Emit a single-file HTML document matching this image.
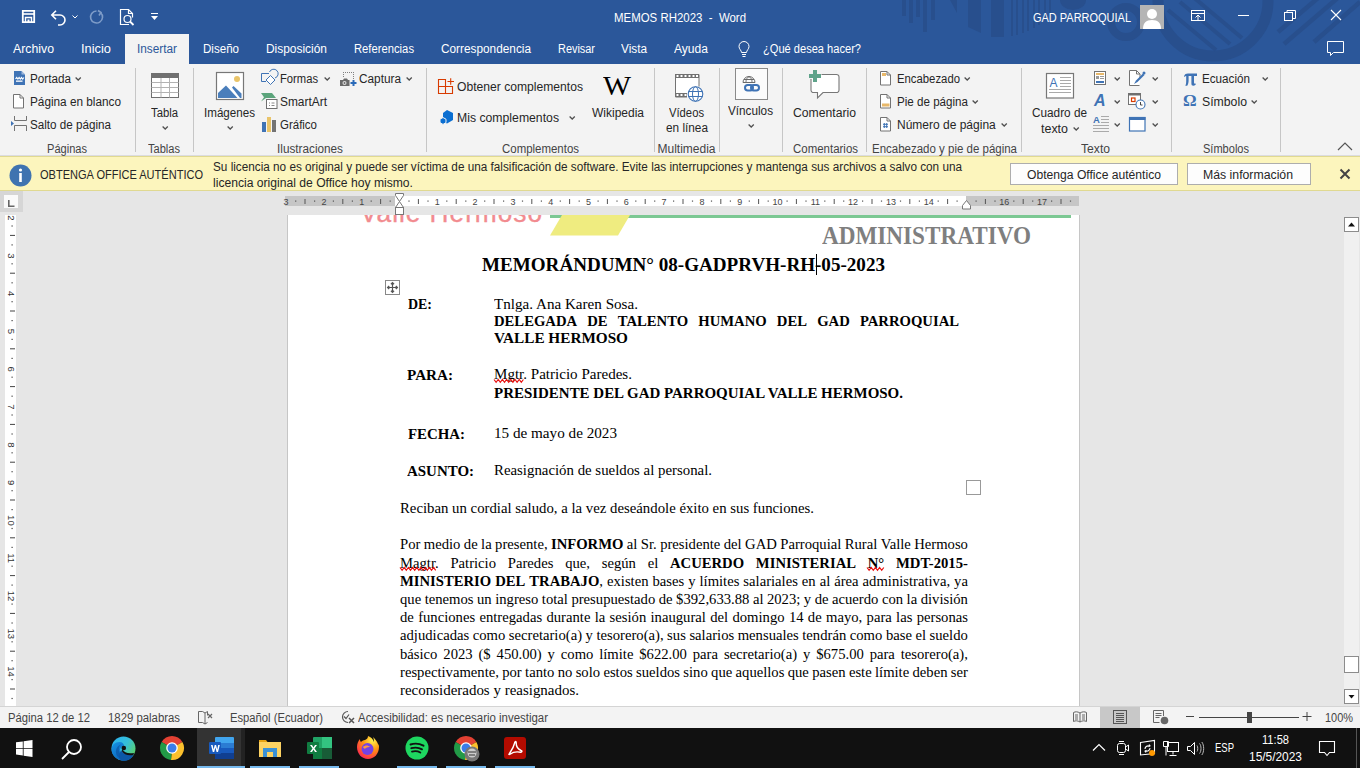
<!DOCTYPE html>
<html><head><meta charset="utf-8">
<style>
*{margin:0;padding:0;box-sizing:border-box}
html,body{width:1360px;height:768px;overflow:hidden;background:#e6e6e6;font-family:"Liberation Sans",sans-serif;position:relative}
.a{position:absolute;white-space:nowrap}
svg.a{overflow:visible}
.wt{position:absolute;color:#fff;font-size:12px;line-height:14px;white-space:nowrap}
.tab{position:absolute;top:42px;color:#fff;font-size:12px;line-height:14px;white-space:nowrap}
.r{position:absolute;font-size:12px;color:#262626;white-space:nowrap;line-height:14px}
.gl{position:absolute;font-size:12px;color:#444;white-space:nowrap;line-height:14px;top:141px}
.sep{position:absolute;top:68px;width:1px;height:84px;background:#c6c6c6}
.m{position:absolute;font-size:12px;color:#262626;white-space:nowrap;line-height:14px}
.d{position:absolute;font-family:"Liberation Serif",serif;font-size:14.67px;line-height:17px;color:#000;white-space:nowrap}
.d b{font-weight:bold}
.rn{position:absolute;font-size:9px;line-height:10px;color:#555;white-space:nowrap}
.st{position:absolute;top:710px;font-size:12px;color:#444;white-space:nowrap;line-height:14px}
u{text-decoration:none}
</style></head><body>
<div class="a" style="left:0;top:0;width:1360px;height:64px;background:#2b579a"></div>
<svg class="a" style="left:0;top:0" width="1360" height="64"><defs><clipPath id="tc"><rect width="1360" height="64"/></clipPath></defs><g clip-path="url(#tc)">
<g fill="#284f8d">
<rect x="902" y="0" width="4" height="16"/><rect x="909" y="0" width="4" height="23"/><rect x="916" y="0" width="4" height="17"/><rect x="923" y="0" width="4" height="32"/><rect x="931" y="0" width="4" height="20"/>
<polygon points="950,0 957,0 957,13"/>
<path d="M968 0h13v33l-13-6z"/><path d="M991 0h13v37h-13z"/>
<rect x="1011" y="0" width="2" height="36"/><rect x="1016" y="0" width="2" height="35"/><rect x="1022" y="0" width="2" height="33"/><rect x="1027" y="0" width="2" height="31"/><rect x="1033" y="0" width="2" height="28"/><rect x="1038" y="0" width="2" height="25"/><rect x="1044" y="0" width="2" height="20"/><rect x="1049" y="0" width="2" height="14"/>
<ellipse cx="1073" cy="0" rx="13" ry="10"/>
</g>
<g fill="none" stroke="#284f8d">
<circle cx="1126" cy="22" r="15" stroke-width="8"/>
<circle cx="1213" cy="1" r="55" stroke-width="11"/>
<g stroke-width="4"><path d="M1168 10l48 40"/><path d="M1180 2l50 42"/><path d="M1192 -4l50 42"/></g>
<g stroke-width="4.5"><path d="M1340 -4l-56 48"/><path d="M1318 -2l-40 34"/><path d="M1360 2l-46 40"/></g>
</g></g></svg>
<span id="t0" class="wt" style="left:614.0px;top:11px;transform:scaleX(0.9532);transform-origin:0 0;">MEMOS RH2023&nbsp; -&nbsp; Word</span>
<span id="t1" class="wt" style="left:1033.0px;top:11px;transform:scaleX(0.9147);transform-origin:0 0;">GAD PARROQUIAL</span>
<div class="a" style="left:1140px;top:5px;width:24px;height:24px;background:#b4b4b4;overflow:hidden"><svg width="24" height="24"><circle cx="12" cy="9" r="5" fill="#fff"/><path d="M3 24c0-6 3-9 9-9s9 3 9 9z" fill="#fff"/></svg></div>
<svg class="a" style="left:1190px;top:8px" width="18" height="18" fill="none" stroke="#fff" stroke-width="1"><rect x="1.5" y="2.5" width="13" height="10"/><path d="M1.5 5.5h13M8 12V7M5.5 9.5L8 7l2.5 2.5"/></svg>
<svg class="a" style="left:1238px;top:14px" width="14" height="3"><rect x="0" y="1" width="11" height="1" fill="#fff"/></svg>
<svg class="a" style="left:1284px;top:9px" width="14" height="14" fill="none" stroke="#fff" stroke-width="1"><rect x="0.5" y="3.5" width="8" height="8"/><path d="M3 3.5V1.5h8.5v8H9"/></svg>
<svg class="a" style="left:1330px;top:9px" width="14" height="14" fill="none" stroke="#fff" stroke-width="1.1"><path d="M1 1l10 10M11 1L1 11"/></svg>
<span id="t2" class="tab" style="left:13.0px;top:42px;transform:scaleX(1.0246);transform-origin:0 0;">Archivo</span>
<span id="t3" class="tab" style="left:81.0px;top:42px;transform:scaleX(1.0708);transform-origin:0 0;">Inicio</span>
<span id="t4" class="tab" style="left:203.0px;top:42px;transform:scaleX(0.9636);transform-origin:0 0;">Diseño</span>
<span id="t5" class="tab" style="left:266.0px;top:42px;transform:scaleX(0.9941);transform-origin:0 0;">Disposición</span>
<span id="t6" class="tab" style="left:354.0px;top:42px;transform:scaleX(0.9370);transform-origin:0 0;">Referencias</span>
<span id="t7" class="tab" style="left:441.0px;top:42px;transform:scaleX(0.9848);transform-origin:0 0;">Correspondencia</span>
<span id="t8" class="tab" style="left:558.0px;top:42px;transform:scaleX(0.9094);transform-origin:0 0;">Revisar</span>
<span id="t9" class="tab" style="left:621.0px;top:42px;transform:scaleX(0.9823);transform-origin:0 0;">Vista</span>
<span id="t10" class="tab" style="left:674.0px;top:42px;transform:scaleX(1.0055);transform-origin:0 0;">Ayuda</span>
<span id="t11" class="tab" style="left:763.0px;top:42px;transform:scaleX(0.9238);transform-origin:0 0;">¿Qué desea hacer?</span>
<div class="a" style="left:125px;top:34px;width:64px;height:30px;background:#f3f3f3"></div>
<span id="t12" class="tab" style="left:137.0px;top:42px;color:#2b579a;transform:scaleX(0.9831);transform-origin:0 0;">Insertar</span>
<svg class="a" style="left:737px;top:41px" width="14" height="17" fill="none" stroke="#fff" stroke-width="1"><path d="M4.5 11.5c0-2-2.5-3.5-2.5-6a5 5 0 0 1 10 0c0 2.5-2.5 4-2.5 6z"/><path d="M5 13.5h4M5.5 15.5h3"/></svg>
<svg class="a" style="left:1326px;top:40px" width="20" height="18" fill="none" stroke="#fff" stroke-width="1"><path d="M1.5 1.5h16v11h-10l-3 3v-3h-3z"/></svg>
<svg class="a" style="left:21px;top:9px" width="17" height="17" fill="none" stroke="#fff"><path d="M1.8 1.8h11.4v11.4H1.8z" stroke-width="1.8"/><path d="M2 5h11" stroke-width="1.6"/><path d="M4.5 13V8.5h6V13" stroke-width="1.4"/><rect x="6.5" y="10.5" width="2" height="3" fill="#fff" stroke="none"/></svg>
<svg class="a" style="left:50px;top:9px" width="30" height="16" fill="none" stroke="#fff" stroke-width="1.6"><path d="M2 6h8a5 5 0 0 1 0 10h-2M6 1.8L1.8 6 6 10.2"/><path d="M22.5 6.5l2.5 2.5 2.5-2.5" stroke-width="1"/></svg>
<svg class="a" style="left:89px;top:9px" width="16" height="16" fill="none" stroke="#7e9cc8" stroke-width="1.6"><path d="M11.5 3.5A6 6 0 1 1 7.5 2"/><path d="M9 1.5l3 2-2 3" /></svg>
<svg class="a" style="left:119px;top:8px" width="18" height="19" fill="none" stroke="#fff" stroke-width="1.2"><path d="M10 16.5H1.5V1.5h8l4 4v4"/><path d="M9.5 1.5v4h4"/><circle cx="8.5" cy="11" r="3.5"/><path d="M11 13.5l3.5 3.5" stroke-width="1.8"/></svg>
<svg class="a" style="left:150px;top:12px" width="10" height="10" fill="#fff"><rect x="1" y="1" width="7" height="1"/><path d="M1 4h7l-3.5 4z"/></svg>
<div class="a" style="left:0;top:64px;width:1360px;height:92px;background:#f3f3f3"></div>
<div class="a" style="left:0;top:155px;width:1360px;height:1px;background:#dcdce0"></div>
<div class="sep" style="left:135px"></div>
<div class="sep" style="left:193px"></div>
<div class="sep" style="left:426px"></div>
<div class="sep" style="left:654px"></div>
<div class="sep" style="left:719px"></div>
<div class="sep" style="left:782px"></div>
<div class="sep" style="left:866px"></div>
<div class="sep" style="left:1021px"></div>
<div class="sep" style="left:1171px"></div>
<div class="sep" style="left:1280px"></div>
<span id="t13" class="r" style="left:30.0px;top:72px;transform:scaleX(0.9755);transform-origin:0 0;">Portada</span>
<svg class="a" style="left:75px;top:77px" width="7" height="4"><path d="M0.6 0.6l2.6 2.4 2.6-2.4" fill="none" stroke="#505050" stroke-width="1.3"/></svg>

<span id="t14" class="r" style="left:30.0px;top:95px;transform:scaleX(0.9811);transform-origin:0 0;">Página en blanco</span>
<span id="t15" class="r" style="left:30.0px;top:118px;transform:scaleX(0.9712);transform-origin:0 0;">Salto de página</span>
<span id="t16" class="gl" style="left:46.5px;top:142px;transform:scaleX(0.9222);transform-origin:0 0;">Páginas</span>
<span id="t17" class="r" style="left:151.0px;top:106px;transform:scaleX(0.9412);transform-origin:0 0;">Tabla</span>
<svg class="a" style="left:162px;top:126px" width="7" height="4"><path d="M0.6 0.6l2.6 2.4 2.6-2.4" fill="none" stroke="#505050" stroke-width="1.3"/></svg>

<span id="t18" class="gl" style="left:147.5px;top:142px;transform:scaleX(0.9225);transform-origin:0 0;">Tablas</span>
<span id="t19" class="r" style="left:204.0px;top:106px;transform:scaleX(0.9677);transform-origin:0 0;">Imágenes</span>
<svg class="a" style="left:227px;top:126px" width="7" height="4"><path d="M0.6 0.6l2.6 2.4 2.6-2.4" fill="none" stroke="#505050" stroke-width="1.3"/></svg>

<span id="t20" class="r" style="left:280.0px;top:72px;transform:scaleX(0.9343);transform-origin:0 0;">Formas</span>
<svg class="a" style="left:324px;top:77px" width="7" height="4"><path d="M0.6 0.6l2.6 2.4 2.6-2.4" fill="none" stroke="#505050" stroke-width="1.3"/></svg>

<span id="t21" class="r" style="left:280.0px;top:95px;transform:scaleX(0.9927);transform-origin:0 0;">SmartArt</span>
<span id="t22" class="r" style="left:280.0px;top:118px;transform:scaleX(0.9564);transform-origin:0 0;">Gráfico</span>
<span id="t23" class="r" style="left:359.0px;top:72px;transform:scaleX(0.9835);transform-origin:0 0;">Captura</span>
<svg class="a" style="left:406px;top:77px" width="7" height="4"><path d="M0.6 0.6l2.6 2.4 2.6-2.4" fill="none" stroke="#505050" stroke-width="1.3"/></svg>

<span id="t24" class="gl" style="left:276.5px;top:142px;transform:scaleX(0.9796);transform-origin:0 0;">Ilustraciones</span>
<span id="t25" class="r" style="left:457.0px;top:80px;transform:scaleX(1.0101);transform-origin:0 0;">Obtener complementos</span>
<span id="t26" class="r" style="left:457.0px;top:111px;transform:scaleX(1.0197);transform-origin:0 0;">Mis complementos</span>
<svg class="a" style="left:569px;top:116px" width="7" height="4"><path d="M0.6 0.6l2.6 2.4 2.6-2.4" fill="none" stroke="#505050" stroke-width="1.3"/></svg>

<span id="t27" class="r" style="left:592.0px;top:106px;">Wikipedia</span>
<span id="t28" class="gl" style="left:501.5px;top:142px;transform:scaleX(0.9541);transform-origin:0 0;">Complementos</span>
<span id="t29" class="r" style="left:669.0px;top:106px;transform:scaleX(0.9368);transform-origin:0 0;">Vídeos</span>
<span id="t30" class="r" style="left:666.0px;top:121px;transform:scaleX(0.9835);transform-origin:0 0;">en línea</span>
<span id="t31" class="gl" style="left:657.5px;top:142px;">Multimedia</span>
<div class="a" style="left:735px;top:68px;width:33px;height:32px;border:1px solid #8a8a8a;background:#fbfbfb"></div>
<span id="t32" class="r" style="left:728.0px;top:104px;transform:scaleX(0.9776);transform-origin:0 0;">Vínculos</span>
<svg class="a" style="left:748px;top:124px" width="7" height="4"><path d="M0.6 0.6l2.6 2.4 2.6-2.4" fill="none" stroke="#505050" stroke-width="1.3"/></svg>

<span id="t33" class="r" style="left:793.0px;top:106px;transform:scaleX(1.0156);transform-origin:0 0;">Comentario</span>
<span id="t34" class="gl" style="left:792.5px;top:142px;transform:scaleX(0.9554);transform-origin:0 0;">Comentarios</span>
<span id="t35" class="r" style="left:897.0px;top:72px;transform:scaleX(0.9440);transform-origin:0 0;">Encabezado</span>
<svg class="a" style="left:964px;top:77px" width="7" height="4"><path d="M0.6 0.6l2.6 2.4 2.6-2.4" fill="none" stroke="#505050" stroke-width="1.3"/></svg>

<span id="t36" class="r" style="left:897.0px;top:95px;transform:scaleX(0.9672);transform-origin:0 0;">Pie de página</span>
<svg class="a" style="left:972px;top:100px" width="7" height="4"><path d="M0.6 0.6l2.6 2.4 2.6-2.4" fill="none" stroke="#505050" stroke-width="1.3"/></svg>

<span id="t37" class="r" style="left:897.0px;top:118px;">Número de página</span>
<svg class="a" style="left:1001px;top:123px" width="7" height="4"><path d="M0.6 0.6l2.6 2.4 2.6-2.4" fill="none" stroke="#505050" stroke-width="1.3"/></svg>

<span id="t38" class="gl" style="left:871.5px;top:142px;transform:scaleX(0.9574);transform-origin:0 0;">Encabezado y pie de página</span>
<span id="t39" class="r" style="left:1032.0px;top:106px;transform:scaleX(0.9813);transform-origin:0 0;">Cuadro de</span>
<span id="t40" class="r" style="left:1041.0px;top:122px;transform:scaleX(1.0378);transform-origin:0 0;">texto</span>
<svg class="a" style="left:1073px;top:127px" width="7" height="4"><path d="M0.6 0.6l2.6 2.4 2.6-2.4" fill="none" stroke="#505050" stroke-width="1.3"/></svg>

<span id="t41" class="gl" style="left:1080.5px;top:142px;transform:scaleX(1.0109);transform-origin:0 0;">Texto</span>
<svg class="a" style="left:1114px;top:77px" width="7" height="4"><path d="M0.6 0.6l2.6 2.4 2.6-2.4" fill="none" stroke="#505050" stroke-width="1.3"/></svg>

<svg class="a" style="left:1152px;top:77px" width="7" height="4"><path d="M0.6 0.6l2.6 2.4 2.6-2.4" fill="none" stroke="#505050" stroke-width="1.3"/></svg>

<svg class="a" style="left:1114px;top:100px" width="7" height="4"><path d="M0.6 0.6l2.6 2.4 2.6-2.4" fill="none" stroke="#505050" stroke-width="1.3"/></svg>

<svg class="a" style="left:1152px;top:100px" width="7" height="4"><path d="M0.6 0.6l2.6 2.4 2.6-2.4" fill="none" stroke="#505050" stroke-width="1.3"/></svg>

<svg class="a" style="left:1114px;top:123px" width="7" height="4"><path d="M0.6 0.6l2.6 2.4 2.6-2.4" fill="none" stroke="#505050" stroke-width="1.3"/></svg>

<svg class="a" style="left:1152px;top:123px" width="7" height="4"><path d="M0.6 0.6l2.6 2.4 2.6-2.4" fill="none" stroke="#505050" stroke-width="1.3"/></svg>

<span id="t42" class="r" style="left:1202.0px;top:72px;transform:scaleX(0.9722);transform-origin:0 0;">Ecuación</span>
<svg class="a" style="left:1262px;top:77px" width="7" height="4"><path d="M0.6 0.6l2.6 2.4 2.6-2.4" fill="none" stroke="#505050" stroke-width="1.3"/></svg>

<span id="t43" class="r" style="left:1202.0px;top:95px;transform:scaleX(1.0220);transform-origin:0 0;">Símbolo</span>
<svg class="a" style="left:1251px;top:100px" width="7" height="4"><path d="M0.6 0.6l2.6 2.4 2.6-2.4" fill="none" stroke="#505050" stroke-width="1.3"/></svg>

<span id="t44" class="gl" style="left:1202.5px;top:142px;transform:scaleX(0.9194);transform-origin:0 0;">Símbolos</span>
<svg class="a" style="left:1337px;top:142px" width="16" height="9"><path d="M1 8l7-7 7 7" fill="none" stroke="#555" stroke-width="1.2"/></svg>
<div class="a" style="left:0;top:156px;width:1360px;height:35px;background:#fcf5bd;border-top:1px solid #e0d991;border-bottom:1px solid #e0d991"></div>
<svg class="a" style="left:9px;top:164px" width="23" height="23"><circle cx="11.5" cy="11.5" r="11" fill="#3f73b0"/><circle cx="11.5" cy="6" r="1.6" fill="#fff"/><rect x="10.2" y="9" width="2.6" height="9" fill="#fff"/></svg>
<span id="t45" class="m" style="left:40.0px;top:168px;transform:scaleX(0.9190);transform-origin:0 0;">OBTENGA OFFICE AUTÉNTICO</span>
<span id="t46" class="m" style="left:213.0px;top:160px;transform:scaleX(0.9790);transform-origin:0 0;">Su licencia no es original y puede ser víctima de una falsificación de software. Evite las interrupciones y mantenga sus archivos a salvo con una</span>
<span id="t47" class="m" style="left:213.0px;top:176px;transform:scaleX(1.0107);transform-origin:0 0;">licencia original de Office hoy mismo.</span>
<div class="a" style="left:1010px;top:163px;width:168px;height:22px;background:#fdfdfd;border:1px solid #adadad"></div>
<div class="a" style="left:1187px;top:163px;width:124px;height:22px;background:#fdfdfd;border:1px solid #adadad"></div>
<span id="t48" class="m" style="left:1027.0px;top:168px;transform:scaleX(1.0110);transform-origin:0 0;">Obtenga Office auténtico</span>
<span id="t49" class="m" style="left:1203.0px;top:168px;transform:scaleX(1.0224);transform-origin:0 0;">Más información</span>
<svg class="a" style="left:1339px;top:168px" width="12" height="12" fill="none" stroke="#444" stroke-width="2"><path d="M1.5 1.5l9 9M10.5 1.5l-9 9"/></svg>
<div class="a" style="left:0;top:191px;width:23px;height:21px;background:#d6d6d6"></div>
<div class="a" style="left:4px;top:195px;width:14px;height:13px;background:#fafafa"></div>
<svg class="a" style="left:8px;top:200px" width="7" height="7"><path d="M0 0h1.6v5.4H6.5V7H0z" fill="#666"/></svg>
<div class="a" style="left:285px;top:196px;width:794px;height:10px;background:#fff"></div>
<div class="a" style="left:285px;top:196px;width:110px;height:10px;background:#c6c6c6"></div>
<div class="a" style="left:966px;top:196px;width:113px;height:10px;background:#c6c6c6"></div>
<div class="a" style="left:5px;top:215px;width:11px;height:491px;background:#fff"></div>
<svg class="a" style="left:0;top:0" width="1360" height="768"><text x="286.1" y="204.5" font-family="Liberation Sans" font-size="9" fill="#444" text-anchor="middle">3</text><rect x="295.1" y="200.5" width="1.2" height="1.2" fill="#555"/><rect x="304.5" y="199" width="1" height="5" fill="#555"/><rect x="314.0" y="200.5" width="1.2" height="1.2" fill="#555"/><text x="323.9" y="204.5" font-family="Liberation Sans" font-size="9" fill="#444" text-anchor="middle">2</text><rect x="332.8" y="200.5" width="1.2" height="1.2" fill="#555"/><rect x="342.3" y="199" width="1" height="5" fill="#555"/><rect x="351.8" y="200.5" width="1.2" height="1.2" fill="#555"/><text x="361.7" y="204.5" font-family="Liberation Sans" font-size="9" fill="#444" text-anchor="middle">1</text><rect x="370.6" y="200.5" width="1.2" height="1.2" fill="#555"/><rect x="380.1" y="199" width="1" height="5" fill="#555"/><rect x="389.6" y="200.5" width="1.2" height="1.2" fill="#555"/><rect x="408.4" y="200.5" width="1.2" height="1.2" fill="#555"/><rect x="417.9" y="199" width="1" height="5" fill="#555"/><rect x="427.4" y="200.5" width="1.2" height="1.2" fill="#555"/><text x="437.3" y="204.5" font-family="Liberation Sans" font-size="9" fill="#444" text-anchor="middle">1</text><rect x="446.2" y="200.5" width="1.2" height="1.2" fill="#555"/><rect x="455.7" y="199" width="1" height="5" fill="#555"/><rect x="465.2" y="200.5" width="1.2" height="1.2" fill="#555"/><text x="475.1" y="204.5" font-family="Liberation Sans" font-size="9" fill="#444" text-anchor="middle">2</text><rect x="484.1" y="200.5" width="1.2" height="1.2" fill="#555"/><rect x="493.5" y="199" width="1" height="5" fill="#555"/><rect x="503.0" y="200.5" width="1.2" height="1.2" fill="#555"/><text x="512.9" y="204.5" font-family="Liberation Sans" font-size="9" fill="#444" text-anchor="middle">3</text><rect x="521.9" y="200.5" width="1.2" height="1.2" fill="#555"/><rect x="531.3" y="199" width="1" height="5" fill="#555"/><rect x="540.8" y="200.5" width="1.2" height="1.2" fill="#555"/><text x="550.7" y="204.5" font-family="Liberation Sans" font-size="9" fill="#444" text-anchor="middle">4</text><rect x="559.7" y="200.5" width="1.2" height="1.2" fill="#555"/><rect x="569.1" y="199" width="1" height="5" fill="#555"/><rect x="578.6" y="200.5" width="1.2" height="1.2" fill="#555"/><text x="588.5" y="204.5" font-family="Liberation Sans" font-size="9" fill="#444" text-anchor="middle">5</text><rect x="597.5" y="200.5" width="1.2" height="1.2" fill="#555"/><rect x="606.9" y="199" width="1" height="5" fill="#555"/><rect x="616.4" y="200.5" width="1.2" height="1.2" fill="#555"/><text x="626.3" y="204.5" font-family="Liberation Sans" font-size="9" fill="#444" text-anchor="middle">6</text><rect x="635.2" y="200.5" width="1.2" height="1.2" fill="#555"/><rect x="644.7" y="199" width="1" height="5" fill="#555"/><rect x="654.1" y="200.5" width="1.2" height="1.2" fill="#555"/><text x="664.1" y="204.5" font-family="Liberation Sans" font-size="9" fill="#444" text-anchor="middle">7</text><rect x="673.0" y="200.5" width="1.2" height="1.2" fill="#555"/><rect x="682.5" y="199" width="1" height="5" fill="#555"/><rect x="691.9" y="200.5" width="1.2" height="1.2" fill="#555"/><text x="701.9" y="204.5" font-family="Liberation Sans" font-size="9" fill="#444" text-anchor="middle">8</text><rect x="710.9" y="200.5" width="1.2" height="1.2" fill="#555"/><rect x="720.3" y="199" width="1" height="5" fill="#555"/><rect x="729.8" y="200.5" width="1.2" height="1.2" fill="#555"/><text x="739.7" y="204.5" font-family="Liberation Sans" font-size="9" fill="#444" text-anchor="middle">9</text><rect x="748.7" y="200.5" width="1.2" height="1.2" fill="#555"/><rect x="758.1" y="199" width="1" height="5" fill="#555"/><rect x="767.6" y="200.5" width="1.2" height="1.2" fill="#555"/><text x="777.5" y="204.5" font-family="Liberation Sans" font-size="9" fill="#444" text-anchor="middle">10</text><rect x="786.5" y="200.5" width="1.2" height="1.2" fill="#555"/><rect x="795.9" y="199" width="1" height="5" fill="#555"/><rect x="805.4" y="200.5" width="1.2" height="1.2" fill="#555"/><text x="815.3" y="204.5" font-family="Liberation Sans" font-size="9" fill="#444" text-anchor="middle">11</text><rect x="824.2" y="200.5" width="1.2" height="1.2" fill="#555"/><rect x="833.7" y="199" width="1" height="5" fill="#555"/><rect x="843.1" y="200.5" width="1.2" height="1.2" fill="#555"/><text x="853.1" y="204.5" font-family="Liberation Sans" font-size="9" fill="#444" text-anchor="middle">12</text><rect x="862.0" y="200.5" width="1.2" height="1.2" fill="#555"/><rect x="871.5" y="199" width="1" height="5" fill="#555"/><rect x="880.9" y="200.5" width="1.2" height="1.2" fill="#555"/><text x="890.9" y="204.5" font-family="Liberation Sans" font-size="9" fill="#444" text-anchor="middle">13</text><rect x="899.9" y="200.5" width="1.2" height="1.2" fill="#555"/><rect x="909.3" y="199" width="1" height="5" fill="#555"/><rect x="918.8" y="200.5" width="1.2" height="1.2" fill="#555"/><text x="928.7" y="204.5" font-family="Liberation Sans" font-size="9" fill="#444" text-anchor="middle">14</text><rect x="937.6" y="200.5" width="1.2" height="1.2" fill="#555"/><rect x="947.1" y="199" width="1" height="5" fill="#555"/><rect x="956.5" y="200.5" width="1.2" height="1.2" fill="#555"/><rect x="975.5" y="200.5" width="1.2" height="1.2" fill="#555"/><rect x="984.9" y="199" width="1" height="5" fill="#555"/><rect x="994.4" y="200.5" width="1.2" height="1.2" fill="#555"/><text x="1004.3" y="204.5" font-family="Liberation Sans" font-size="9" fill="#444" text-anchor="middle">16</text><rect x="1013.2" y="200.5" width="1.2" height="1.2" fill="#555"/><rect x="1022.7" y="199" width="1" height="5" fill="#555"/><rect x="1032.1" y="200.5" width="1.2" height="1.2" fill="#555"/><text x="1042.1" y="204.5" font-family="Liberation Sans" font-size="9" fill="#444" text-anchor="middle">17</text><rect x="1051.0" y="200.5" width="1.2" height="1.2" fill="#555"/><rect x="1060.5" y="199" width="1" height="5" fill="#555"/><rect x="1069.9" y="200.5" width="1.2" height="1.2" fill="#555"/><text x="0" y="0" transform="translate(8.3 218.0) rotate(90)" font-family="Liberation Sans" font-size="9.5" fill="#333" text-anchor="middle">2</text><rect x="11.5" y="225.4" width="1.2" height="1.2" fill="#444"/><rect x="10" y="234.9" width="5" height="1" fill="#444"/><rect x="11.5" y="244.3" width="1.2" height="1.2" fill="#444"/><text x="0" y="0" transform="translate(8.3 255.8) rotate(90)" font-family="Liberation Sans" font-size="9.5" fill="#333" text-anchor="middle">3</text><rect x="11.5" y="263.2" width="1.2" height="1.2" fill="#444"/><rect x="10" y="272.7" width="5" height="1" fill="#444"/><rect x="11.5" y="282.2" width="1.2" height="1.2" fill="#444"/><text x="0" y="0" transform="translate(8.3 293.6) rotate(90)" font-family="Liberation Sans" font-size="9.5" fill="#333" text-anchor="middle">4</text><rect x="11.5" y="301.1" width="1.2" height="1.2" fill="#444"/><rect x="10" y="310.5" width="5" height="1" fill="#444"/><rect x="11.5" y="320.0" width="1.2" height="1.2" fill="#444"/><text x="0" y="0" transform="translate(8.3 331.4) rotate(90)" font-family="Liberation Sans" font-size="9.5" fill="#333" text-anchor="middle">5</text><rect x="11.5" y="338.8" width="1.2" height="1.2" fill="#444"/><rect x="10" y="348.3" width="5" height="1" fill="#444"/><rect x="11.5" y="357.8" width="1.2" height="1.2" fill="#444"/><text x="0" y="0" transform="translate(8.3 369.2) rotate(90)" font-family="Liberation Sans" font-size="9.5" fill="#333" text-anchor="middle">6</text><rect x="11.5" y="376.6" width="1.2" height="1.2" fill="#444"/><rect x="10" y="386.1" width="5" height="1" fill="#444"/><rect x="11.5" y="395.6" width="1.2" height="1.2" fill="#444"/><text x="0" y="0" transform="translate(8.3 407.0) rotate(90)" font-family="Liberation Sans" font-size="9.5" fill="#333" text-anchor="middle">7</text><rect x="11.5" y="414.4" width="1.2" height="1.2" fill="#444"/><rect x="10" y="423.9" width="5" height="1" fill="#444"/><rect x="11.5" y="433.4" width="1.2" height="1.2" fill="#444"/><text x="0" y="0" transform="translate(8.3 444.8) rotate(90)" font-family="Liberation Sans" font-size="9.5" fill="#333" text-anchor="middle">8</text><rect x="11.5" y="452.2" width="1.2" height="1.2" fill="#444"/><rect x="10" y="461.7" width="5" height="1" fill="#444"/><rect x="11.5" y="471.1" width="1.2" height="1.2" fill="#444"/><text x="0" y="0" transform="translate(8.3 482.6) rotate(90)" font-family="Liberation Sans" font-size="9.5" fill="#333" text-anchor="middle">9</text><rect x="11.5" y="490.1" width="1.2" height="1.2" fill="#444"/><rect x="10" y="499.5" width="5" height="1" fill="#444"/><rect x="11.5" y="509.0" width="1.2" height="1.2" fill="#444"/><text x="0" y="0" transform="translate(8.3 520.4) rotate(90)" font-family="Liberation Sans" font-size="9.5" fill="#333" text-anchor="middle">10</text><rect x="11.5" y="527.9" width="1.2" height="1.2" fill="#444"/><rect x="10" y="537.3" width="5" height="1" fill="#444"/><rect x="11.5" y="546.8" width="1.2" height="1.2" fill="#444"/><text x="0" y="0" transform="translate(8.3 558.2) rotate(90)" font-family="Liberation Sans" font-size="9.5" fill="#333" text-anchor="middle">11</text><rect x="11.5" y="565.6" width="1.2" height="1.2" fill="#444"/><rect x="10" y="575.1" width="5" height="1" fill="#444"/><rect x="11.5" y="584.5" width="1.2" height="1.2" fill="#444"/><text x="0" y="0" transform="translate(8.3 596.0) rotate(90)" font-family="Liberation Sans" font-size="9.5" fill="#333" text-anchor="middle">12</text><rect x="11.5" y="603.5" width="1.2" height="1.2" fill="#444"/><rect x="10" y="612.9" width="5" height="1" fill="#444"/><rect x="11.5" y="622.4" width="1.2" height="1.2" fill="#444"/><text x="0" y="0" transform="translate(8.3 633.8) rotate(90)" font-family="Liberation Sans" font-size="9.5" fill="#333" text-anchor="middle">13</text><rect x="11.5" y="641.2" width="1.2" height="1.2" fill="#444"/><rect x="10" y="650.7" width="5" height="1" fill="#444"/><rect x="11.5" y="660.1" width="1.2" height="1.2" fill="#444"/><text x="0" y="0" transform="translate(8.3 671.6) rotate(90)" font-family="Liberation Sans" font-size="9.5" fill="#333" text-anchor="middle">14</text><rect x="11.5" y="679.0" width="1.2" height="1.2" fill="#444"/><rect x="10" y="688.5" width="5" height="1" fill="#444"/><rect x="11.5" y="697.9" width="1.2" height="1.2" fill="#444"/></svg>
<svg class="a" style="left:394px;top:193px" width="11" height="23" fill="#fff" stroke="#777" stroke-width="1"><path d="M1.5 0.5h8v2l-4 6-4-6z"/><path d="M5.5 8.5l4 6v0h-8l4-6z"/><rect x="1.5" y="14.5" width="8" height="7"/></svg>
<svg class="a" style="left:961px;top:200px" width="11" height="10" fill="#fff" stroke="#777" stroke-width="1"><path d="M5.5 0.5l4 5v3.5h-8V5.5z"/></svg>
<div class="a" style="left:287px;top:215px;width:793px;height:491px;background:#fff;border-left:1px solid #c6c6c6;border-right:1px solid #c6c6c6"></div>
<div class="a" style="left:288px;top:215px;width:791px;height:491px;overflow:hidden"><span id="t50" class="a" style="left:72.0px;top:-17px;font-family:'Liberation Sans',sans-serif;font-size:27px;line-height:30px;color:#f28b8f;font-weight:normal;-webkit-text-stroke:0.4px #f28b8f;letter-spacing:1px;transform:scaleX(0.9730);transform-origin:0 0;">Valle Hermoso</span><div class="a" style="left:262px;top:0;width:521px;height:3px;background:#7cc893"></div><svg class="a" style="left:0;top:0" width="791" height="30"><polygon points="274,0 342,0 330,20.6 262,20.6" fill="#efec80"/></svg></div>
<span id="t51" class="d" style="left:822.0px;top:222px;font-size:24.5px;line-height:28px;color:#7f7f7f;transform:scaleX(0.9459);transform-origin:0 0;"><b>ADMINISTRATIVO</b></span>
<span id="t52" class="d" style="left:482.0px;top:254px;font-size:18.67px;line-height:22px;transform:scaleX(1.0232);transform-origin:0 0;"><b>MEMORÁNDUMN° 08-GADPRVH-RH-05-2023</b></span>
<div class="a" style="left:816px;top:254px;width:1px;height:21px;background:#000"></div>
<div class="a" style="left:385px;top:280px;width:15px;height:15px;border:1px solid #888;background:#fff"></div>
<svg class="a" style="left:386px;top:281px" width="13" height="13" fill="none" stroke="#555" stroke-width="1.2"><path d="M6.5 2v9M2 6.5h9"/><path d="M5 3.2l1.5-1.5 1.5 1.5M5 9.8l1.5 1.5 1.5-1.5M3.2 5l-1.5 1.5 1.5 1.5M9.8 5l1.5 1.5-1.5 1.5" stroke-width="1.4"/></svg>
<span id="t53" class="d" style="left:408.0px;top:295.55px;transform:scaleX(0.9505);transform-origin:0 0;"><b>DE:</b></span>
<span id="t54" class="d" style="left:494.0px;top:295.55px;transform:scaleX(1.0314);transform-origin:0 0;">Tnlga. Ana Karen Sosa.</span>
<span id="t55" class="d" style="left:494.0px;top:329.55px;transform:scaleX(1.0401);transform-origin:0 0;"><b>VALLE HERMOSO</b></span>
<span id="t56" class="d" style="left:407.0px;top:366.55px;transform:scaleX(1.0337);transform-origin:0 0;"><b>PARA:</b></span>
<span id="t57" class="d" style="left:494.0px;top:365.55px;transform:scaleX(1.0272);transform-origin:0 0;"><u>Mgtr</u>. Patricio Paredes.</span>
<span id="t58" class="d" style="left:494.0px;top:384.55px;transform:scaleX(1.0207);transform-origin:0 0;"><b>PRESIDENTE DEL GAD PARROQUIAL VALLE HERMOSO.</b></span>
<span id="t59" class="d" style="left:408.0px;top:425.55px;transform:scaleX(1.0145);transform-origin:0 0;"><b>FECHA:</b></span>
<span id="t60" class="d" style="left:494.0px;top:424.55px;transform:scaleX(1.0348);transform-origin:0 0;">15 de mayo de 2023</span>
<span id="t61" class="d" style="left:407.0px;top:462.55px;transform:scaleX(1.0197);transform-origin:0 0;"><b>ASUNTO:</b></span>
<span id="t62" class="d" style="left:494.0px;top:461.55px;transform:scaleX(1.0125);transform-origin:0 0;">Reasignación de sueldos al personal.</span>
<div class="a" style="left:966px;top:480px;width:15px;height:15px;border:1px solid #999;background:#fff"></div>
<span id="t63" class="d" style="left:400.0px;top:499.55px;transform:scaleX(1.0081);transform-origin:0 0;">Reciban un cordial saludo, a la vez deseándole éxito en sus funciones.</span>
<div class="d" style="left:494px;top:312.55px;width:465px;display:flex;justify-content:space-between"><span><b>DELEGADA</b></span><span><b>DE</b></span><span><b>TALENTO</b></span><span><b>HUMANO</b></span><span><b>DEL</b></span><span><b>GAD</b></span><span><b>PARROQUIAL</b></span></div>
<div class="d" style="left:400px;top:536.35px;width:568px;display:flex;justify-content:space-between"><span>Por</span><span>medio</span><span>de</span><span>la</span><span>presente,</span><span><b>INFORMO</b></span><span>al</span><span>Sr.</span><span>presidente</span><span>del</span><span>GAD</span><span>Parroquial</span><span>Rural</span><span>Valle</span><span>Hermoso</span></div>
<div class="d" style="left:400px;top:554.65px;width:568px;display:flex;justify-content:space-between"><span><u>Magtr</u>.</span><span>Patricio</span><span>Paredes</span><span>que,</span><span>según</span><span>el</span><span><b>ACUERDO</b></span><span><b>MINISTERIAL</b></span><span><b><u>N°</u></b></span><span><b>MDT-2015-</b></span></div>
<div class="d" style="left:400px;top:572.95px;width:568px;display:flex;justify-content:space-between"><span><b>MINISTERIO</b></span><span><b>DEL</b></span><span><b>TRABAJO</b>,</span><span>existen</span><span>bases</span><span>y</span><span>límites</span><span>salariales</span><span>en</span><span>al</span><span>área</span><span>administrativa,</span><span>ya</span></div>
<div class="d" style="left:400px;top:591.05px;width:568px;display:flex;justify-content:space-between"><span>que</span><span>tenemos</span><span>un</span><span>ingreso</span><span>total</span><span>presupuestado</span><span>de</span><span>$392,633.88</span><span>al</span><span>2023;</span><span>y</span><span>de</span><span>acuerdo</span><span>con</span><span>la</span><span>división</span></div>
<div class="d" style="left:400px;top:609.15px;width:568px;display:flex;justify-content:space-between"><span>de</span><span>funciones</span><span>entregadas</span><span>durante</span><span>la</span><span>sesión</span><span>inaugural</span><span>del</span><span>domingo</span><span>14</span><span>de</span><span>mayo,</span><span>para</span><span>las</span><span>personas</span></div>
<div class="d" style="left:400px;top:627.35px;width:568px;display:flex;justify-content:space-between"><span>adjudicadas</span><span>como</span><span>secretario(a)</span><span>y</span><span>tesorero(a),</span><span>sus</span><span>salarios</span><span>mensuales</span><span>tendrán</span><span>como</span><span>base</span><span>el</span><span>sueldo</span></div>
<div class="d" style="left:400px;top:645.55px;width:568px;display:flex;justify-content:space-between"><span>básico</span><span>2023</span><span>($</span><span>450.00)</span><span>y</span><span>como</span><span>límite</span><span>$622.00</span><span>para</span><span>secretario(a)</span><span>y</span><span>$675.00</span><span>para</span><span>tesorero(a),</span></div>
<div class="d" style="left:400px;top:663.75px;width:568px;display:flex;justify-content:space-between"><span>respectivamente,</span><span>por</span><span>tanto</span><span>no</span><span>solo</span><span>estos</span><span>sueldos</span><span>sino</span><span>que</span><span>aquellos</span><span>que</span><span>pasen</span><span>este</span><span>límite</span><span>deben</span><span>ser</span></div>
<span id="t64" class="d" style="left:400.0px;top:681.75px;transform:scaleX(1.0204);transform-origin:0 0;">reconsiderados y reasignados.</span>
<div class="a" style="left:1344px;top:232px;width:15px;height:457px;background:#f0f0f0"></div>
<div class="a" style="left:1344px;top:217px;width:15px;height:15px;border:1px solid #8c8c8c;background:#fff"></div>
<svg class="a" style="left:1344px;top:217px" width="15" height="15"><path d="M4 9.5h7L7.5 5.5z" fill="#111"/></svg>
<div class="a" style="left:1344px;top:656px;width:15px;height:17px;border:1px solid #8c8c8c;background:#fff"></div>
<div class="a" style="left:1344px;top:689px;width:15px;height:15px;border:1px solid #8c8c8c;background:#fff"></div>
<svg class="a" style="left:1344px;top:689px" width="15" height="15"><path d="M4.5 6h6L7.5 9.5z" fill="#111"/></svg>
<div class="a" style="left:0;top:706px;width:1360px;height:22px;background:#f3f3f3;border-top:1px solid #d4d4d4"></div>
<span id="t65" class="st" style="left:8.0px;top:711px;transform:scaleX(0.9380);transform-origin:0 0;">Página 12 de 12</span>
<span id="t66" class="st" style="left:108.0px;top:711px;transform:scaleX(0.9466);transform-origin:0 0;">1829 palabras</span>
<svg class="a" style="left:197px;top:709px" width="17" height="16" fill="none" stroke="#666" stroke-width="1"><path d="M1.5 2.5h4l2.5 1.5v11l-2.5-1.5h-4z"/><path d="M8 4l2.5-1.5v4M8 15l2.5-1.5"/><path d="M11 5l4 4M15 5l-4 4" stroke-width="1.2"/></svg>
<span id="t67" class="st" style="left:230.0px;top:711px;transform:scaleX(0.9357);transform-origin:0 0;">Español (Ecuador)</span>
<svg class="a" style="left:339px;top:709px" width="17" height="16" fill="none" stroke="#555" stroke-width="1.2"><path d="M9 2.5a5.5 5.5 0 1 0 0 11"/><path d="M5 7.5l2 2 3-4"/><path d="M10 9l5 5M15 9l-5 5" stroke-width="1.5"/></svg>
<span id="t68" class="st" style="left:358.0px;top:711px;transform:scaleX(0.9527);transform-origin:0 0;">Accesibilidad: es necesario investigar</span>
<svg class="a" style="left:1072px;top:709px" width="16" height="16" fill="none" stroke="#666" stroke-width="1"><path d="M1.5 3.5c2-1 4-1 6.5 0.5c2.5-1.5 4.5-1.5 6.5-0.5v9c-2-1-4-1-6.5 0.5c-2.5-1.5-4.5-1.5-6.5-0.5z M8 4v9"/><path d="M3 6h3M3 8h3M3 10h3M10 6h3M10 8h3M10 10h3"/></svg>
<div class="a" style="left:1100px;top:707px;width:40px;height:21px;background:#c8c8c8"></div>
<svg class="a" style="left:1112px;top:709px" width="16" height="16" fill="none" stroke="#555" stroke-width="1"><rect x="1.5" y="1.5" width="13" height="13"/><path d="M4 4.5h8M4 6.5h8M4 8.5h8M4 10.5h8M4 12.5h8"/></svg>
<svg class="a" style="left:1152px;top:709px" width="18" height="16" fill="none" stroke="#666" stroke-width="1"><path d="M11.5 7V1.5h-10v12h6"/><path d="M3.5 4.5h6M3.5 6.5h6M3.5 8.5h4"/><circle cx="12.5" cy="11.5" r="3.8" fill="#666" stroke="none"/></svg>
<div class="a" style="left:1186px;top:716px;width:8px;height:1px;background:#444"></div>
<div class="a" style="left:1199px;top:717px;width:100px;height:1px;background:#444"></div>
<div class="a" style="left:1247px;top:712px;width:5px;height:11px;background:#444"></div>
<svg class="a" style="left:1302px;top:711px" width="11" height="11"><path d="M5 1v9M0.5 5.5h9" stroke="#444" stroke-width="1"/></svg>
<span id="t69" class="st" style="left:1325.0px;top:711px;transform:scaleX(0.9120);transform-origin:0 0;">100%</span>
<div class="a" style="left:0;top:728px;width:1360px;height:40px;background:#111"></div>
<div class="a" style="left:197px;top:728px;width:44px;height:40px;background:#333"></div>
<div class="a" style="left:241px;top:728px;width:4px;height:40px;background:#222"></div>
<div class="a" style="left:197px;top:766px;width:48px;height:2px;background:#76b9ed"></div>
<div class="a" style="left:250px;top:766px;width:40px;height:2px;background:#76b9ed"></div>
<div class="a" style="left:299px;top:766px;width:40px;height:2px;background:#76b9ed"></div>
<div class="a" style="left:397px;top:766px;width:40px;height:2px;background:#76b9ed"></div>
<div class="a" style="left:446px;top:766px;width:40px;height:2px;background:#76b9ed"></div>
<div class="a" style="left:495px;top:766px;width:40px;height:2px;background:#76b9ed"></div>
<svg class="a" style="left:16px;top:740px" width="17" height="17" fill="#fff"><path d="M0 2.3l6.8-0.9v6.6H0zM7.6 1.3L16.5 0v8H7.6zM0 8.8h6.8v6.6L0 14.5zM7.6 8.8h8.9V17l-8.9-1.3z"/></svg>
<svg class="a" style="left:60px;top:737px" width="24" height="24" fill="none" stroke="#fff" stroke-width="1.8"><circle cx="14" cy="10" r="7"/><path d="M9 15l-7 7"/></svg>
<svg class="a" style="left:111px;top:736px" width="25" height="25"><defs><linearGradient id="eg1" x1="0" y1="0.2" x2="1" y2="0.8"><stop offset="0" stop-color="#2bb4f0"/><stop offset="0.5" stop-color="#35c0d8"/><stop offset="1" stop-color="#62d45a"/></linearGradient><linearGradient id="eg2" x1="0" y1="0" x2="1" y2="1"><stop offset="0" stop-color="#1593e6"/><stop offset="1" stop-color="#0b53a8"/></linearGradient></defs>
<circle cx="12.5" cy="12.5" r="12" fill="url(#eg1)"/>
<path d="M0.6 13.5C0.5 9 4 6 8.5 6c3 0 4.5 2 4.5 4c-2.5 0-4.5 2.5-4 5.5c0.5 4 5 6.5 10 5.5c1.5-0.3 2.5-0.8 3.5-1.5c-2 3-5.5 5-10 5c-6.5 0-12-5-11.9-11z" fill="url(#eg2)"/>
<path d="M5 17c-0.5-4 1.5-7.5 5-8.5c-2 1.5-2.5 4-2 6.5c0.8 4 4.5 6.8 9 7c-1.3 0.6-3 1-4.5 1c-4 0-7-2.5-7.5-6z" fill="#0a4e9e" opacity="0.6"/>
<path d="M10 14c1.5 3.5 6 5 13 3.5c-1.5 4.5-5.5 7.5-10.5 7.5c-4 0-6-4-2.5-11z" fill="#0c57a6"/><circle cx="12.8" cy="12" r="2.3" fill="#111"/>
<path d="M11.5 13.5c1.5 3 5.5 4.5 11.5 3.5l-0.8 2c-5 1-9.5-0.5-11.5-4z" fill="#111"/>
</svg>
<svg class="a" style="left:159px;top:735px" width="26" height="26"><path d="M13 13L2.61 7A12 12 0 0 1 23.39 7z" fill="#e34133"/><path d="M13 13L23.39 7A12 12 0 0 1 12 25z" fill="#fbc02d"/><path d="M13 13L12 25A12 12 0 0 1 2.61 7z" fill="#229a47"/><circle cx="13" cy="13" r="5.8" fill="#fff"/><circle cx="13" cy="13" r="4.5" fill="#3b7de9"/></svg>
<svg class="a" style="left:209px;top:737px" width="25" height="22"><rect x="6" y="0" width="19" height="22" rx="1" fill="#41a5ee"/><rect x="6" y="6" width="19" height="5" fill="#2b7cd3"/><rect x="6" y="11" width="19" height="5" fill="#185abd"/><rect x="6" y="16" width="19" height="6" fill="#103f91"/><rect x="0" y="5" width="12" height="12" rx="1" fill="#185abd"/><path d="M2 8h1.6l1 4.5 1.1-4.5h1.4l1.1 4.5 1-4.5H10.8l-1.8 7H7.6L6.4 10.6 5.2 15H3.8z" fill="#fff"/></svg>
<svg class="a" style="left:259px;top:739px" width="23" height="19"><path d="M0 1h7l1.5 2H22v15H0z" fill="#e5a214"/><rect x="0" y="3" width="22" height="15" fill="#fcd262"/><path d="M4 9h14v9h-4v-5h-6v5H4z" fill="#3a91d6"/></svg>
<svg class="a" style="left:307px;top:737px" width="25" height="22"><rect x="6" y="0" width="19" height="22" rx="1" fill="#21a366"/><rect x="15" y="0" width="10" height="11" fill="#33c481"/><rect x="6" y="11" width="19" height="11" fill="#107c41"/><rect x="15" y="11" width="10" height="11" fill="#185c37"/><rect x="0" y="5" width="12" height="12" rx="1" fill="#107c41"/><path d="M3 8h2l1.5 2.5L8 8h2l-2.5 3.5L10 15H8l-1.5-2.5L5 15H3l2.5-3.5z" fill="#fff"/></svg>
<svg class="a" style="left:354px;top:735px" width="26" height="26"><defs><radialGradient id="ff1" cx="0.7" cy="0.2" r="1"><stop offset="0" stop-color="#fff44f"/><stop offset="0.4" stop-color="#ff980e"/><stop offset="0.8" stop-color="#ff3647"/><stop offset="1" stop-color="#e31587"/></radialGradient></defs>
<path d="M24 9c-1-3-3-5-5-7c1 2 1 4 1 5c-1-3-3-5-6-6c0 2-1 3-3 4c-2 0-3 1-4 2c-1-1-1-2-1-3c-2 2-3 5-3 8c0 7 5 12 11 12s11-5 11-12c0-1 0-2-1-3z" fill="url(#ff1)"/><circle cx="13.5" cy="14" r="6" fill="#7542e5"/><path d="M9 12c2-2 5-2 7 0c-1 0-3 0-4 1c-1 1-2 1-3-1z" fill="#ff9640"/></svg>
<svg class="a" style="left:405px;top:736px" width="24" height="24"><circle cx="12" cy="12" r="11.5" fill="#1ed760"/><path d="M5.5 8.5c4-1.3 9-1 13 1.2M6.3 12.2c3.5-1 7.5-0.7 10.7 1.1M7 15.6c2.8-0.8 5.8-0.5 8.3 0.9" fill="none" stroke="#111" stroke-width="1.9" stroke-linecap="round"/></svg>
<svg class="a" style="left:453px;top:735px" width="26" height="26"><path d="M13 13L2.61 7A12 12 0 0 1 23.39 7z" fill="#e34133"/><path d="M13 13L23.39 7A12 12 0 0 1 12 25z" fill="#fbc02d"/><path d="M13 13L12 25A12 12 0 0 1 2.61 7z" fill="#229a47"/><circle cx="13" cy="13" r="5.8" fill="#fff"/><circle cx="13" cy="13" r="4.5" fill="#3b7de9"/></svg>
<svg class="a" style="left:464px;top:746px" width="16" height="16"><circle cx="8" cy="8" r="7.5" fill="#777"/><circle cx="8" cy="7" r="4.5" fill="#ccc"/><path d="M4 6h8M5 9h6" stroke="#333" stroke-width="1"/></svg>
<svg class="a" style="left:504px;top:737px" width="22" height="22"><rect width="22" height="22" rx="3" fill="#b30b00"/><path d="M5.5 16.5C8 13 10 9 10.8 5.5C11 4 12.2 4 12.2 5.5C12 9 14 12 17 13.5C18.5 14 18 15.5 16.5 15.2C13 14.5 9 15 6 17.2C4.8 18 4.5 17.2 5.5 16.5z" fill="none" stroke="#fff" stroke-width="1.4" stroke-linejoin="round"/></svg>
<svg class="a" style="left:1092px;top:742px" width="14" height="10" fill="none" stroke="#fff" stroke-width="1.2"><path d="M1 8.5l6-6 6 6"/></svg>
<svg class="a" style="left:1116px;top:739px" width="14" height="18" fill="none" stroke="#fff" stroke-width="1"><rect x="1.5" y="4.5" width="8" height="9" rx="2"/><path d="M9.5 8l3-2v6l-3-2"/><path d="M3 2.5h5M3 15.5h5"/></svg>
<svg class="a" style="left:1139px;top:739px" width="18" height="18" fill="none" stroke="#fff" stroke-width="1.1"><path d="M1.5 3.5l14-2v13l-14 1.5z"/><path d="M6 10c0-2 2-3.5 4-3M10 5.5l1 1.3-1.5 1M11 9c0 2-2 3.5-4 3M7 13.5l-1-1.3 1.5-1"/><circle cx="13" cy="14" r="3" fill="#ff9900" stroke="none"/></svg>
<svg class="a" style="left:1162px;top:740px" width="18" height="17" fill="none" stroke="#fff" stroke-width="1"><rect x="5.5" y="2.5" width="11" height="9"/><path d="M11 11.5v3M7.5 15.5h7M1.5 1.5h5v5h-5zM4 6.5v9"/></svg>
<svg class="a" style="left:1186px;top:740px" width="18" height="17" fill="none" stroke="#fff" stroke-width="1"><path d="M1.5 6.5h3l4-4v12l-4-4h-3z"/><path d="M11 5.5c1 1 1 5 0 6M13.5 3.5c2 2 2 8 0 10M15.8 2c2.5 3 2.5 10 0 13" stroke="#bbb"/></svg>
<span id="t70" class="wt" style="left:1215.0px;top:741px;transform:scaleX(0.7912);transform-origin:0 0;">ESP</span>
<span id="t71" class="wt" style="left:1262.0px;top:733px;transform:scaleX(0.9265);transform-origin:0 0;">11:58</span>
<span id="t72" class="wt" style="left:1249.0px;top:750px;transform:scaleX(0.9927);transform-origin:0 0;">15/5/2023</span>
<svg class="a" style="left:1318px;top:740px" width="18" height="17" fill="none" stroke="#fff" stroke-width="1.1"><path d="M1.5 1.5h15v11h-5l-2.5 3-2.5-3h-5z"/></svg>
<div class="a" style="left:1356px;top:728px;width:1px;height:40px;background:#555"></div>
<svg class="a" style="left:14px;top:71px" width="12" height="15" ><path d="M0 0h7.5l3.5 3.5V14H0z" fill="#3f73b5"/><path d="M7.5 0L11 3.5H7.5z" fill="#9db7dc"/><path d="M1.5 8l1.2-1.5 1.2 1.5 1.2-1.5 1.2 1.5 1.2-1.5 1.2 1.5 1.2-1.5" fill="none" stroke="#fff" stroke-width="1.1"/><rect x="2" y="9.5" width="6.5" height="1.3" fill="#fff"/></svg>
<svg class="a" style="left:13px;top:94px" width="12" height="15" ><path d="M0.5 0.5h6.5l3.5 3.5v10H0.5z" fill="#fff" stroke="#737373" stroke-width="1"/><path d="M7 0.5v3.5h3.5" fill="none" stroke="#737373" stroke-width="1"/></svg>
<svg class="a" style="left:11px;top:116px" width="17" height="16" ><path d="M3.5 0v4.5h12V0M3.5 15V9.5h12V15" fill="none" stroke="#737373" stroke-width="1"/><path d="M0 5l3 2.5L0 10z" fill="#3f73b5"/></svg>
<svg class="a" style="left:151px;top:73px" width="28" height="25" ><rect x="0.5" y="0.5" width="27" height="24" fill="#fff" stroke="#6f6f6f" stroke-width="1"/><rect x="0" y="0" width="28" height="5" fill="#707070"/><path d="M10 5v19.5M18.5 5v19.5M0.5 9.5h27M0.5 14.5h27M0.5 19.5h27" stroke="#b2b2b2" stroke-width="1"/></svg>
<svg class="a" style="left:216px;top:72px" width="28" height="28" ><rect x="0.5" y="0.5" width="27" height="27" fill="#fff" stroke="#777" stroke-width="1.2"/><circle cx="21" cy="7" r="3" fill="#e9c46a"/><path d="M2 26V21l8-7.5 11.5 12.5z" fill="#4a7ebb"/><path d="M16 15.5l1.5-1.5 8 7.5V26h-1.5z" fill="#4a7ebb"/></svg>
<svg class="a" style="left:260px;top:69px" width="18" height="17" ><g fill="none" stroke="#3f73b5" stroke-width="1"><path d="M9 4.5H1.5v8H6"/><path d="M9.5 3A4.5 4.5 0 1 1 15 9"/><path d="M10.5 6.5l4.5 4.5-4.5 4.5-4.5-4.5z" fill="#fff"/></g></svg>
<svg class="a" style="left:261px;top:93px" width="17" height="16" ><path d="M0 0h11l4 5H5L0 8.5l3-4.3z" fill="#5ba47b"/><rect x="5.5" y="6.5" width="10.5" height="9" fill="#fff" stroke="#707070" stroke-width="1"/><path d="M8 10h1M10.5 10h3M8 12.5h1M10.5 12.5h3" stroke="#888" stroke-width="1"/></svg>
<svg class="a" style="left:262px;top:117px" width="15" height="15" ><rect x="0" y="5" width="4" height="10" fill="#3f73b5"/><rect x="5" y="0" width="4" height="15" fill="#e9c46a"/><rect x="10" y="3" width="4" height="12" fill="#737373"/></svg>
<svg class="a" style="left:340px;top:72px" width="17" height="15" ><g fill="#808080"><rect x="3" y="0" width="1" height="1"/><rect x="5" y="0" width="1" height="1"/><rect x="7" y="0" width="1" height="1"/><rect x="9" y="0" width="1" height="1"/><rect x="11" y="0" width="1" height="1"/><rect x="13" y="0" width="1" height="1"/><rect x="3" y="2" width="1" height="1"/><rect x="3" y="4" width="1" height="1"/><rect x="13" y="2" width="1" height="1"/><rect x="13" y="4" width="1" height="1"/><rect x="13" y="6" width="1" height="1"/></g><path d="M0 8h3l1-1.5h3L8 8h1.5v6H0z" fill="#6a6a6a"/><circle cx="4.5" cy="11" r="2" fill="#ddd"/><circle cx="4.5" cy="11" r="0.9" fill="#6a6a6a"/><path d="M10.5 11h6M13.5 8v6" stroke="#2a6ab8" stroke-width="2"/></svg>
<svg class="a" style="left:437px;top:77px" width="18" height="18" ><g fill="none" stroke="#d83b01" stroke-width="1.1"><path d="M1.5 2.5h7v7h-7zM1.5 9.5h7v7h-7zM8.5 9.5h7v7h-7z"/><path d="M10.5 4.5h6.5M13.7 1.2v6.6"/></g></svg>
<svg class="a" style="left:438px;top:109px" width="17" height="17" ><path d="M9 1l6 3v7l-6 3.5-4-2V4z" fill="#0a6ed1"/><path d="M5 8.5l3 1.7v3.4l-3 1.8-3-1.8V10.2z" fill="#0a6ed1" stroke="#f3f3f3" stroke-width="1"/></svg>
<span class="a" style="left:603px;top:72px;font-family:'Liberation Serif',serif;font-size:28px;line-height:28px;color:#000;transform:scaleX(1.06);transform-origin:0 0">W</span>
<svg class="a" style="left:675px;top:74px" width="30" height="30" ><rect x="0.5" y="0.5" width="23.5" height="22.5" fill="#fff"/><path d="M0.5 0.5h23.5v12M0.5 0.5v22.5H12" fill="none" stroke="#737373" stroke-width="1"/><rect x="0" y="0" width="24" height="4" fill="#707070"/><rect x="0" y="19" width="12" height="4" fill="#707070"/><g fill="#fff"><rect x="1.5" y="1" width="2" height="2"/><rect x="5.5" y="1" width="2" height="2"/><rect x="9.5" y="1" width="2" height="2"/><rect x="13.5" y="1" width="2" height="2"/><rect x="17.5" y="1" width="2" height="2"/><rect x="21" y="1" width="2" height="2"/><rect x="1.5" y="20" width="2" height="2"/><rect x="5.5" y="20" width="2" height="2"/><rect x="9.5" y="20" width="2" height="2"/></g><circle cx="20.5" cy="20" r="7.3" fill="#fff" stroke="#3f73b5" stroke-width="1.1"/><ellipse cx="20.5" cy="20" rx="3" ry="7.3" fill="none" stroke="#3f73b5" stroke-width="1"/><path d="M13.5 17.5h14M13.5 22.5h14" stroke="#3f73b5" stroke-width="1"/></svg>
<svg class="a" style="left:742px;top:74px" width="20" height="20" ><g fill="none" stroke="#6a6a6a" stroke-width="1"><path d="M1 8.5a6 6 0 0 1 12 0"/><path d="M7 2.5c-3 2-3 4-3 6M7 2.5c3 2 3 4 3 6"/><path d="M2 5.5h10"/><path d="M1 8.5h12"/></g><g fill="none" stroke="#3f73b5" stroke-width="2"><rect x="3" y="11" width="8" height="5.5" rx="2.75"/><rect x="9" y="11" width="8" height="5.5" rx="2.75"/></g></svg>
<svg class="a" style="left:808px;top:69px" width="33" height="31" ><path d="M11 5.5h25" /><path d="M13.5 5.5h15a2.5 2.5 0 0 1 2.5 2.5v13a2.5 2.5 0 0 1-2.5 2.5H15l-5.5 5.5v-5.5H5.5a2.5 2.5 0 0 1-2.5-2.5V10" fill="#fff" stroke="#777" stroke-width="1.1"/><path d="M7 1v12M1 7h12" stroke="#5fa38a" stroke-width="4"/></svg>
<svg class="a" style="left:880px;top:71px" width="12" height="15" ><path d="M0.5 0.5h6.5l3.5 3.5v10H0.5z" fill="#fff" stroke="#737373" stroke-width="1"/><path d="M7 0.5v3.5h3.5" fill="none" stroke="#737373" stroke-width="1"/><rect x="2" y="2" width="4" height="3" fill="#e8b86a"/></svg>
<svg class="a" style="left:880px;top:94px" width="12" height="15" ><path d="M0.5 0.5h6.5l3.5 3.5v10H0.5z" fill="#fff" stroke="#737373" stroke-width="1"/><path d="M7 0.5v3.5h3.5" fill="none" stroke="#737373" stroke-width="1"/><rect x="2" y="9.5" width="7.5" height="3" fill="#e8b86a"/></svg>
<svg class="a" style="left:880px;top:117px" width="12" height="15" ><path d="M0.5 0.5h6.5l3.5 3.5v10H0.5z" fill="#fff" stroke="#737373" stroke-width="1"/><path d="M7 0.5v3.5h3.5" fill="none" stroke="#737373" stroke-width="1"/><path d="M4.3 6v5M6.7 6v5M3 7.3h5M3 9.7h5" stroke="#3f73b5" stroke-width="1"/></svg>
<svg class="a" style="left:1046px;top:73px" width="28" height="26" ><rect x="0.5" y="0.5" width="27" height="24.5" fill="#fff" stroke="#777" stroke-width="1.2"/><text x="3.5" y="13.5" font-family="Liberation Sans" font-size="12" fill="#3f73b5">A</text><path d="M14 4.5h11M14 7.5h11M14 10.5h11M14 13.5h11M3 16.5h22M3 19.5h22" stroke="#aaa" stroke-width="1"/></svg>
<svg class="a" style="left:1094px;top:71px" width="13" height="15" ><rect x="0.5" y="0.5" width="11" height="13" fill="#fff" stroke="#737373" stroke-width="1"/><rect x="2" y="2" width="8" height="2" fill="#e8b86a"/><rect x="2" y="5" width="3" height="3" fill="#999"/><path d="M6 5.5h4M6 7.5h4" stroke="#999" stroke-width="1"/><rect x="2" y="10" width="8" height="2" fill="#3f73b5"/></svg>
<span class="a" style="left:1094px;top:92px;font-family:'Liberation Sans',sans-serif;font-size:16px;line-height:17px;font-weight:bold;font-style:italic;color:#3f73b5">A</span>
<svg class="a" style="left:1093px;top:115px" width="18" height="17" ><text x="0" y="8" font-family="Liberation Sans" font-size="9.5" font-weight="bold" fill="#3f73b5">A</text><path d="M8 1.5h8M8 4.5h8M8 7.5h8M0 10.5h16M0 13.5h16M0 16.5h16" stroke="#aaa" stroke-width="1"/></svg>
<svg class="a" style="left:1129px;top:70px" width="17" height="17" ><path d="M10.5 15.5H0.5V0.5h7l3.5 3.5V8" fill="#fff" stroke="#737373" stroke-width="1"/><path d="M7.5 0.5v3.5h3.5" fill="none" stroke="#737373" stroke-width="1"/><path d="M5 14l2-3.5 7-7 1.5 1.5-7 7z" fill="#3f73b5"/><circle cx="15" cy="3" r="1.5" fill="#3f73b5"/></svg>
<svg class="a" style="left:1128px;top:93px" width="18" height="17" ><rect x="0.5" y="0.5" width="12" height="11" fill="#fff" stroke="#737373" stroke-width="1"/><rect x="0" y="0" width="13" height="2.5" fill="#707070"/><rect x="3.5" y="5" width="3.5" height="3.5" fill="none" stroke="#d83b01" stroke-width="1.2"/><circle cx="12.5" cy="11.5" r="4.5" fill="#fff" stroke="#3f73b5" stroke-width="1.1"/><path d="M12.5 9v3h2" fill="none" stroke="#444" stroke-width="1"/></svg>
<svg class="a" style="left:1129px;top:117px" width="17" height="15" ><rect x="0.5" y="0.5" width="15.5" height="13.5" fill="#fff" stroke="#3f73b5" stroke-width="1.2"/><rect x="0" y="0" width="16.5" height="3" fill="#3f73b5"/></svg>
<svg class="a" style="left:1183px;top:72px" width="15" height="14" ><path d="M1 4.2c0.8-2 2-2.7 4-2.7h9v2.6h-3v6.2c0 1.3 0.5 1.6 1.5 1.2l0.3 0.9c-1 1-2.2 1.4-3.2 1.2c-0.8-0.2-1.2-1-1.2-2.2V4.1H5.6v4.5c0 2.3-0.6 4-1.4 5.1H2.3c0.7-1.2 0.9-2.8 0.9-5V4.1c-0.8 0-1.3 0.3-1.6 0.8z" fill="#3f73b5"/></svg>
<span class="a" style="left:1183px;top:91px;font-family:'Liberation Serif',serif;font-size:17px;line-height:20px;font-weight:bold;color:#3f73b5">Ω</span>
<svg class="a" style="left:0;top:0" width="1360" height="768"><polyline points="494.0,379.5 496.1,382.3 498.2,379.5 500.3,382.3 502.4,379.5 504.5,382.3 506.6,379.5 508.7,382.3 510.8,379.5 512.9,382.3 515.0,379.5 517.1,382.3 519.2,379.5 521.3,382.3 523.4,379.5" fill="none" stroke="#e81010" stroke-width="1.2"/></svg>
<svg class="a" style="left:0;top:0" width="1360" height="768"><polyline points="400.0,567.5 402.1,570.3 404.2,567.5 406.3,570.3 408.4,567.5 410.5,570.3 412.6,567.5 414.7,570.3 416.8,567.5 418.9,570.3 421.0,567.5 423.1,570.3 425.2,567.5 427.3,570.3 429.4,567.5 431.5,570.3 433.6,567.5 435.7,570.3" fill="none" stroke="#e81010" stroke-width="1.2"/></svg>
<svg class="a" style="left:0;top:0" width="1360" height="768"><polyline points="867.0,567.5 869.1,570.3 871.2,567.5 873.3,570.3 875.4,567.5 877.5,570.3 879.6,567.5 881.7,570.3 883.8,567.5" fill="none" stroke="#e81010" stroke-width="1.2"/></svg></body></html>
